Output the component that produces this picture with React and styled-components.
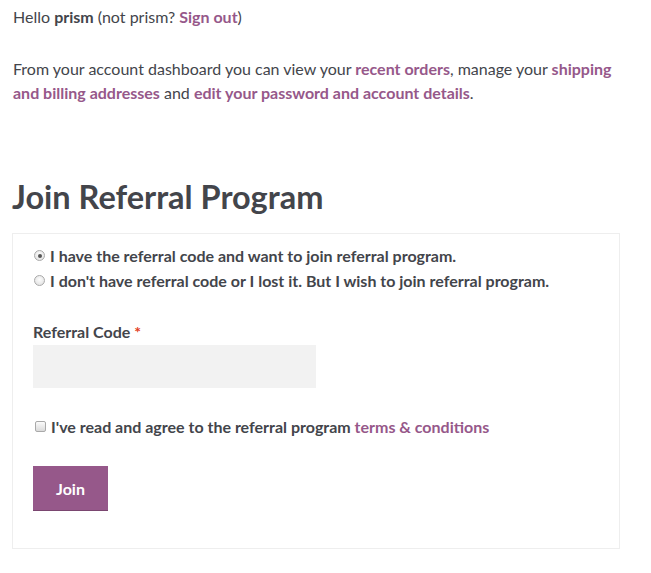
import styled, { createGlobalStyle } from 'styled-components';

const GlobalStyle = createGlobalStyle`
  body {
    margin: 0;
    background: #fff;
    font-family: Lato, "Liberation Sans", sans-serif;
    color: #43454b;
  }
`;

const Page = styled.div`
  width: 607px;
  padding: 5px 0 0 13px;
  font-size: 16px;
  line-height: 24px;
`;

const Para = styled.p`
  margin: 0 0 28px;
`;

const Link = styled.a`
  color: #96588a;
  font-weight: 700;
  text-decoration: none;
`;

const Heading = styled.h2`
  margin: 72px 0 16px -1px;
  font-size: 32.5px;
  line-height: 40px;
  font-weight: 700;
  color: #43454b;
`;

const Box = styled.form`
  border: 1px solid #eeeeee;
  margin-left: -1px;
  padding: 9px 20px 37px 20px;
`;

const Choice = styled.label`
  display: flex;
  align-items: center;
  gap: 5px;
  font-weight: 700;
  line-height: 25px;
  margin-left: ${p => p.indent || 0}px;
`;

const Radio = styled.input.attrs({ type: 'radio' })`
  appearance: none;
  margin: 0;
  width: 11px;
  height: 11px;
  border-radius: 50%;
  border: 1px solid #a9a9a9;
  background: radial-gradient(circle at 50% 40%, #fdfdfd, #dcdcdc);
  box-sizing: border-box;
  position: relative;
  &:checked::after {
    content: '';
    position: absolute;
    left: 2.5px;
    top: 2.5px;
    width: 4px;
    height: 4px;
    border-radius: 50%;
    background: #555;
  }
`;

const Check = styled.input.attrs({ type: 'checkbox' })`
  appearance: none;
  margin: 0;
  width: 11px;
  height: 11px;
  border-radius: 2px;
  border: 1px solid #a9a9a9;
  background: linear-gradient(#fbfbfb, #dadada);
  box-sizing: border-box;
`;

const Field = styled.div`
  margin: 27px 0 0;
`;

const Label = styled.label`
  display: block;
  font-weight: 700;
  line-height: 24px;
  margin-bottom: 1px;
`;

const Required = styled.span`
  color: #e2401c;
`;

const Input = styled.input`
  display: block;
  width: 283px;
  height: 43px;
  box-sizing: border-box;
  border: 0;
  background: #f2f2f2;
  outline: none;
`;

const Terms = styled.div`
  margin: 26px 0 0;
`;

const Button = styled.button`
  margin-top: 27px;
  width: 75px;
  height: 45px;
  border: 0;
  border-bottom: 1px solid #7a4670;
  background: #96588a;
  color: #fff;
  font-family: inherit;
  font-size: 16px;
  font-weight: 700;
  cursor: pointer;
`;

const App = () => {
  return (
    <>
      <GlobalStyle />
      <Page>
        <Para>
          Hello <strong>prism</strong> (not prism? <Link href="#">Sign out</Link>)
        </Para>
        <Para>
          From your account dashboard you can view your <Link href="#">recent orders</Link>, manage your{' '}
          <Link href="#">shipping and billing addresses</Link> and{' '}
          <Link href="#">edit your password and account details</Link>.
        </Para>

        <Heading>Join Referral Program</Heading>

        <Box onSubmit={e => e.preventDefault()}>
          <Choice indent={1}>
            <Radio name="ref" defaultChecked />
            I have the referral code and want to join referral program.
          </Choice>
          <Choice indent={1}>
            <Radio name="ref" />
            I don't have referral code or I lost it. But I wish to join referral program.
          </Choice>

          <Field>
            <Label>
              Referral Code <Required>*</Required>
            </Label>
            <Input type="text" />
          </Field>

          <Terms>
            <Choice indent={2}>
              <Check />
              <span>
                I've read and agree to the referral program <Link href="#">terms &amp; conditions</Link>
              </span>
            </Choice>
          </Terms>

          <Button type="submit">Join</Button>
        </Box>
      </Page>
    </>
  );
};

export default App;
